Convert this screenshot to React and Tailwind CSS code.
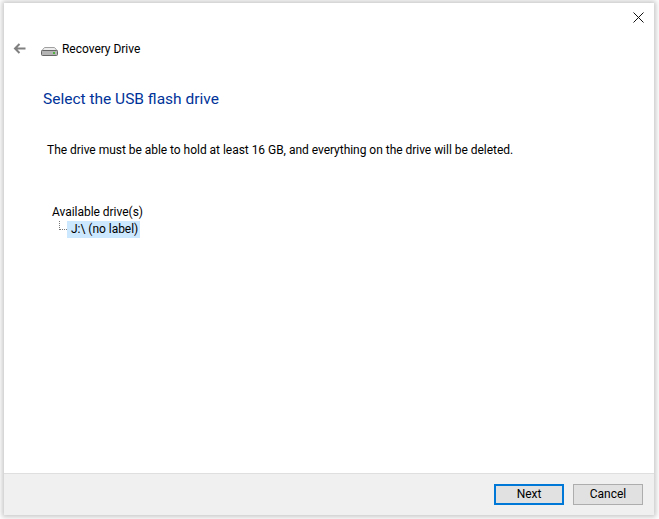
import React from "react";

const App = () => {
  return (
    <div className="w-[659px] h-[519px] bg-white pt-[3px] pl-[4px] pr-[5px] pb-[4px] font-['Roboto',sans-serif] text-[12px] tracking-[-0.03px] text-black overflow-hidden">
      <div className="w-[650px] h-[512px] flex flex-col bg-white shadow-[0_0_5px_2px_rgba(0,0,0,0.22)]">
        <div className="flex justify-end h-[30px] pt-[9px] pr-[10px]">
          <svg width="11" height="11" viewBox="0 0 11 11" stroke="#111" strokeWidth="1" fill="none">
            <path d="M0.5 0.5L10.5 10.5M10.5 0.5L0.5 10.5" />
          </svg>
        </div>

        <div className="flex items-center h-[30px] pl-[9px]">
          <svg width="13" height="11" viewBox="0 0 13 11" stroke="#808080" strokeWidth="2" fill="none">
            <path d="M12.5 5.5H2M6.5 1L2 5.5L6.5 10" />
          </svg>
          <svg className="ml-[15px] mt-[7px]" width="17" height="9" viewBox="0 0 17 9">
            <path d="M3.5 0.5H13.5L16.5 4H0.5Z" fill="#ececec" stroke="#a0a0a0" strokeWidth="1" />
            <rect x="0.5" y="3.5" width="16" height="5" rx="1" fill="#b4b4b4" stroke="#666666" strokeWidth="1" />
            <rect x="12" y="5" width="2" height="2" fill="#4fb33f" />
          </svg>
          <span className="ml-[4px] mt-[2px]">Recovery Drive</span>
        </div>

        <h1 className="mt-[26px] ml-[39px] text-[15.5px] leading-[20px] font-normal tracking-normal text-[#003399]">
          Select the USB flash drive
        </h1>

        <p className="mt-[33px] ml-[43px] leading-[17px] whitespace-nowrap">
          The drive must be able to hold at least 16 GB, and everything on the drive will be deleted.
        </p>

        <div className="mt-[45px] ml-[48px] flex-1">
          <div className="leading-[16px]">Available drive(s)</div>
          <div className="flex items-start h-[17px] mt-[1px]">
            <div className="ml-[7px] w-[8px] h-[9px] border-l border-b border-dotted border-[#777]" />
            <span className="bg-[#cce8ff] leading-[16px] pl-[4px] pr-[2px] h-[17px]">J:\ (no label)</span>
          </div>
        </div>

        <div className="h-[42px] flex items-center justify-end gap-[9px] pr-[11px] pb-[1px] bg-[#f0f0f0] border-t border-[#dfdfdf]">
          <button className="w-[70px] h-[21px] bg-[#e1e1e1] border-2 border-[#0078d7] leading-none">Next</button>
          <button className="w-[70px] h-[21px] bg-[#e1e1e1] border border-[#adadad] leading-none">Cancel</button>
        </div>
      </div>
    </div>
  );
};

export default App;
